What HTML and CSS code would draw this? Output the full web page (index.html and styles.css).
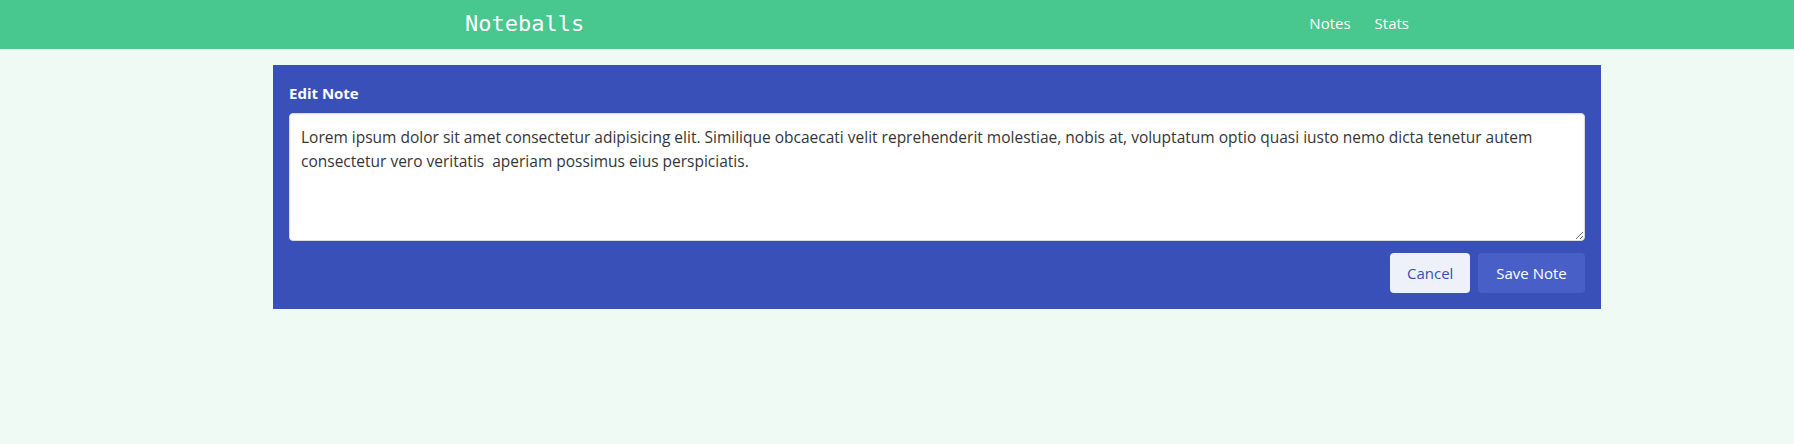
FILE: index.html
```html
<!DOCTYPE html>
<html lang="en">
<head>
<meta charset="utf-8">
<title>Noteballs</title>
<link rel="stylesheet" href="styles.css">
</head>
<body>
<nav class="navbar">
  <div class="navbar-container">
    <div class="brand">Noteballs</div>
    <div class="menu">
      <a class="nav-item" href="#">Notes</a>
      <a class="nav-item" href="#">Stats</a>
    </div>
  </div>
</nav>
<main class="page">
  <section class="card">
    <label class="label" for="note">Edit Note</label>
    <textarea id="note" class="textarea">Lorem ipsum dolor sit amet consectetur adipisicing elit. Similique obcaecati velit reprehenderit molestiae, nobis at, voluptatum optio quasi iusto nemo dicta tenetur autem consectetur vero veritatis  aperiam possimus eius perspiciatis.</textarea>
    <div class="buttons">
      <button class="btn btn-light">Cancel</button>
      <button class="btn btn-link">Save Note</button>
    </div>
  </section>
</main>
</body>
</html>
```
FILE: styles.css
```css
* { box-sizing: border-box; }
html, body { margin: 0; padding: 0; }
body {
  background: #effaf5;
  font-family: "Open Sans", "Noto Sans", sans-serif;
  font-size: 15px;
  color: #4a4a4a;
  width: 1794px;
  min-height: 444px;
  padding-left: 80px;
}
.navbar {
  background: #48c78e;
  height: 49px;
  margin-left: -80px;
  padding-left: 80px;
}
.navbar-container {
  width: 968px;
  height: 47px;
  margin: 0 auto;
  display: flex;
  align-items: center;
  justify-content: space-between;
}
.brand {
  font-family: "DejaVu Sans Mono", monospace;
  font-size: 22px;
  color: #fff;
  padding: 0 12px;
}
.menu { display: flex; }
.nav-item {
  color: #fff;
  text-decoration: none;
  padding: 6px 12px 8px;
  font-size: 15px;
  line-height: 24px;
}
.page {
  padding-top: 16px;
}
.card {
  width: 1328px;
  margin: 0 auto;
  background: #3850b7;
  padding: 16px;
  display: flex;
  flex-direction: column;
}
.label {
  color: #fff;
  font-weight: 700;
  font-size: 15px;
  line-height: 24px;
  margin-bottom: 8px;
}
.textarea {
  display: block;
  width: 100%;
  height: 128px;
  border: 1px solid #dbdbdb;
  border-radius: 4px;
  background: #fff;
  padding: 11px;
  font-family: "Open Sans", "Noto Sans", sans-serif;
  font-size: 15.5px;
  line-height: 24px;
  color: #363636;
  resize: vertical;
  margin: 0 0 12px;
  box-shadow: inset 0 1px 2px rgba(10,10,10,.05);
}
.buttons {
  display: flex;
  justify-content: flex-end;
  gap: 8px;
}
.btn {
  height: 40px;
  border: 1px solid transparent;
  border-radius: 4px;
  padding: 0 16px;
  font-family: "Open Sans", "Noto Sans", sans-serif;
  font-size: 15px;
  cursor: pointer;
}
.btn-light { background: #eff1fa; color: #3850b7; width: 80px; }
.btn-link { background: #485fc7; color: #fff; width: 107px; }
```
